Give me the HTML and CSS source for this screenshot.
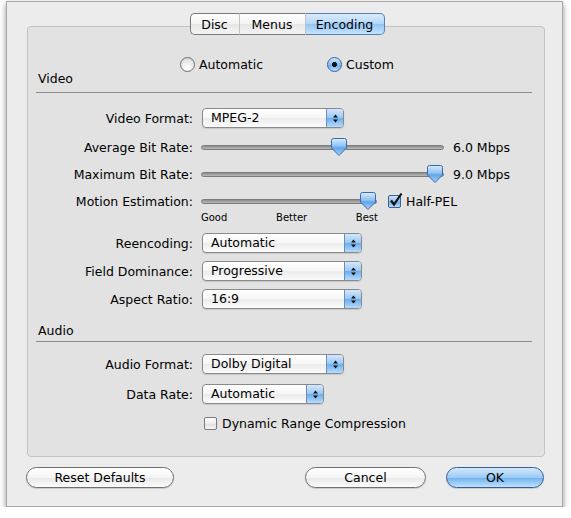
FILE: index.html
```html
<!DOCTYPE html>
<html lang="en">

<head>
    <meta charset="UTF-8">
    <meta name="viewport" content="width=device-width, initial-scale=1.0">
    <title>Encoding</title>
    <link rel="stylesheet" href="styles.css">
</head>

<body>
    <div class="window">
        <div class="tabs">
            <span class="tab tab-disc">Disc</span><span class="tab tab-menus">Menus</span><span class="tab tab-encoding active">Encoding</span>
        </div>

        <div class="panel">
            <div class="mode">
                <label class="radio radio-auto"><span class="radio-dot"></span>Automatic</label>
                <label class="radio on"><span class="radio-dot"></span>Custom</label>
            </div>

            <!-- Video -->
            <div class="section">Video</div>

            <div class="row row-format">
                <span class="label">Video Format:</span>
                <div class="popup popup-md">
                    <span class="popup-text">MPEG-2</span>
                    <span class="popup-arrows"><svg width="7" height="11" viewBox="0 0 7 11"><path d="M3.5 1.5L6 4.5H1Z M3.5 9.5L1 6.5H6Z" fill="#111"/></svg></span>
                </div>
            </div>

            <div class="row row-avg">
                <span class="label">Average Bit Rate:</span>
                <div class="slider slider-long">
                    <div class="track"></div>
                    <svg class="thumb" style="left: 130px" width="16" height="18" viewBox="0 0 16 18"><defs><linearGradient id="tg1" x1="0" y1="0" x2="0" y2="1"><stop offset="0" stop-color="#d8eafc"/><stop offset="0.45" stop-color="#8fc1f2"/><stop offset="0.55" stop-color="#5ea6ea"/><stop offset="1" stop-color="#a9d3fa"/></linearGradient></defs><path d="M2.5 0.5H13.5Q15.5 0.5 15.5 2.5V10L8 17.5L0.5 10V2.5Q0.5 0.5 2.5 0.5Z" fill="url(#tg1)" stroke="#3c6aa8"/></svg>
                </div>
                <span class="value">6.0 Mbps</span>
            </div>

            <div class="row row-max">
                <span class="label">Maximum Bit Rate:</span>
                <div class="slider slider-long">
                    <div class="track"></div>
                    <svg class="thumb" style="left: 226px" width="16" height="18" viewBox="0 0 16 18"><defs><linearGradient id="tg2" x1="0" y1="0" x2="0" y2="1"><stop offset="0" stop-color="#d8eafc"/><stop offset="0.45" stop-color="#8fc1f2"/><stop offset="0.55" stop-color="#5ea6ea"/><stop offset="1" stop-color="#a9d3fa"/></linearGradient></defs><path d="M2.5 0.5H13.5Q15.5 0.5 15.5 2.5V10L8 17.5L0.5 10V2.5Q0.5 0.5 2.5 0.5Z" fill="url(#tg2)" stroke="#3c6aa8"/></svg>
                </div>
                <span class="value">9.0 Mbps</span>
            </div>

            <div class="row row-motion">
                <span class="label">Motion Estimation:</span>
                <div class="slider slider-short">
                    <div class="track"></div>
                    <svg class="thumb" style="left: 159px" width="16" height="18" viewBox="0 0 16 18"><defs><linearGradient id="tg3" x1="0" y1="0" x2="0" y2="1"><stop offset="0" stop-color="#d8eafc"/><stop offset="0.45" stop-color="#8fc1f2"/><stop offset="0.55" stop-color="#5ea6ea"/><stop offset="1" stop-color="#a9d3fa"/></linearGradient></defs><path d="M2.5 0.5H13.5Q15.5 0.5 15.5 2.5V10L8 17.5L0.5 10V2.5Q0.5 0.5 2.5 0.5Z" fill="url(#tg3)" stroke="#3c6aa8"/></svg>
                </div>
                <label class="check check-pel">
                    <span class="box checked"><svg width="16" height="16" viewBox="0 0 16 16"><path d="M3 8.5L6 12.5L13.5 1.5" fill="none" stroke="#111" stroke-width="2.2"/></svg></span>Half-PEL
                </label>
            </div>
            <div class="ticks">
                <span>Good</span><span>Better</span><span>Best</span>
            </div>

            <div class="row row-reenc">
                <span class="label">Reencoding:</span>
                <div class="popup popup-lg">
                    <span class="popup-text">Automatic</span>
                    <span class="popup-arrows"><svg width="7" height="11" viewBox="0 0 7 11"><path d="M3.5 1.5L6 4.5H1Z M3.5 9.5L1 6.5H6Z" fill="#111"/></svg></span>
                </div>
            </div>

            <div class="row row-field">
                <span class="label">Field Dominance:</span>
                <div class="popup popup-lg">
                    <span class="popup-text">Progressive</span>
                    <span class="popup-arrows"><svg width="7" height="11" viewBox="0 0 7 11"><path d="M3.5 1.5L6 4.5H1Z M3.5 9.5L1 6.5H6Z" fill="#111"/></svg></span>
                </div>
            </div>

            <div class="row row-aspect">
                <span class="label">Aspect Ratio:</span>
                <div class="popup popup-lg">
                    <span class="popup-text">16:9</span>
                    <span class="popup-arrows"><svg width="7" height="11" viewBox="0 0 7 11"><path d="M3.5 1.5L6 4.5H1Z M3.5 9.5L1 6.5H6Z" fill="#111"/></svg></span>
                </div>
            </div>

            <!-- Audio -->
            <div class="section section-audio">Audio</div>

            <div class="row row-audio">
                <span class="label">Audio Format:</span>
                <div class="popup popup-md">
                    <span class="popup-text">Dolby Digital</span>
                    <span class="popup-arrows"><svg width="7" height="11" viewBox="0 0 7 11"><path d="M3.5 1.5L6 4.5H1Z M3.5 9.5L1 6.5H6Z" fill="#111"/></svg></span>
                </div>
            </div>

            <div class="row row-rate">
                <span class="label">Data Rate:</span>
                <div class="popup popup-sm">
                    <span class="popup-text">Automatic</span>
                    <span class="popup-arrows"><svg width="7" height="11" viewBox="0 0 7 11"><path d="M3.5 1.5L6 4.5H1Z M3.5 9.5L1 6.5H6Z" fill="#111"/></svg></span>
                </div>
            </div>

            <div class="row row-drc">
                <span class="label"></span>
                <label class="check"><span class="box"></span>Dynamic Range Compression</label>
            </div>
        </div>

        <div class="buttons">
            <button class="btn btn-reset">Reset Defaults</button>
            <span class="spacer"></span>
            <button class="btn btn-cancel">Cancel</button>
            <button class="btn btn-ok">OK</button>
        </div>
    </div>
</body>
</html>
```

FILE: styles.css
```css
* {
    box-sizing: border-box;
}

body {
    font-family: "DejaVu Sans", Verdana, sans-serif;
    font-size: 12.5px;
    color: #000;
    background-color: #ffffff;
    margin: 0;
    padding: 0;
}

.window {
    width: 557px;
    height: 506px;
    margin: 1px 0 0 6px;
    padding: 11px 17px 0 20px;
    background-color: #ececec;
    border: 1px solid #a8a8a8;
    box-shadow: 0 3px 6px rgba(0, 0, 0, 0.45);
}

/* segmented tab control */
.tabs {
    display: flex;
    justify-content: center;
    position: relative;
    z-index: 1;
    height: 22px;
    padding-left: 2px;
}

.tab {
    display: flex;
    align-items: center;
    justify-content: center;
    height: 22px;
    border: 1px solid #7a7a7a;
    border-left: 1px solid #c4c4c4;
    border-right: none;
    background: linear-gradient(#ffffff, #f3f3f3 50%, #e6e6e6 51%, #f4f4f4);
    font-size: 12.5px;
}

.tab-disc {
    width: 49px;
    border-left: 1px solid #7a7a7a;
    border-radius: 5px 0 0 5px;
}

.tab-menus {
    width: 66px;
}

.tab-encoding {
    width: 80px;
    border-right: 1px solid #5b7fb2;
    border-radius: 0 5px 5px 0;
}

.tab.active {
    border-top-color: #5b7fb2;
    border-bottom-color: #5b7fb2;
    background: linear-gradient(#d9ecfd, #b3d6f7 50%, #92c5f3 51%, #c6e3fd);
}

.panel {
    height: 431px;
    margin-top: -9px;
    padding-top: 27px;
    background-color: #e2e2e2;
    border: 1px solid #c3c3c3;
    border-radius: 4px;
}

/* automatic / custom */
.mode {
    display: flex;
    align-items: center;
    height: 20px;
    padding-left: 152px;
}

.radio {
    display: flex;
    align-items: center;
    gap: 4px;
}

.radio-auto {
    width: 147px;
}

.radio-dot {
    width: 15px;
    height: 15px;
    border-radius: 50%;
    border: 1px solid #6f6f6f;
    background: radial-gradient(circle at 50% 75%, #ffffff, #e6e6e6 60%, #c8c8c8);
}

.radio.on .radio-dot {
    border-color: #3c5f94;
    background: radial-gradient(circle, #111 0 2.2px, transparent 2.7px),
        linear-gradient(#cfe5fb, #8cbef0 50%, #64a8ec 51%, #b9dcfb);
}

.section {
    height: 23px;
    margin: -4px 12px 0 8px;
    padding: 1px 0 0 2px;
    border-bottom: 1px solid #8c8c8c;
}

.section-audio {
    height: 20px;
    margin-top: 12px;
}

.row {
    display: flex;
    align-items: center;
    height: 22px;
}

.label {
    width: 165px;
    flex-shrink: 0;
    margin-right: 9px;
    text-align: right;
}

.row-format { margin-top: 14px; }
.row-avg { margin-top: 7px; }
.row-max { margin-top: 5px; }
.row-motion { margin-top: 5px; }
.row-reenc { margin-top: 8px; }
.row-field { margin-top: 6px; }
.row-aspect { margin-top: 6px; }
.row-audio { margin-top: 11px; }
.row-rate { margin-top: 8px; }
.row-drc { margin-top: 7px; }

/* pop-up menus */
.popup {
    display: flex;
    height: 20px;
    border: 1px solid #8a8a8a;
    border-radius: 4px;
    overflow: hidden;
    background: linear-gradient(#ffffff, #f6f6f6 50%, #ebebeb 51%, #fbfbfb);
    box-shadow: 0 1px 1px rgba(0, 0, 0, 0.12);
}

.popup-sm { width: 122px; }
.popup-md { width: 142px; }
.popup-lg { width: 160px; }

.popup-text {
    flex: 1;
    padding-left: 8px;
    line-height: 18px;
}

.popup-arrows {
    display: flex;
    align-items: center;
    justify-content: center;
    width: 17px;
    border-left: 1px solid #6b8dbd;
    background: linear-gradient(#d3e7fc, #99c7f3 50%, #6aaeee 51%, #b7dbfc);
}

/* sliders */
.slider {
    position: relative;
    height: 22px;
    margin-left: -1px;
}

.slider-long { width: 243px; }
.slider-short { width: 176px; }

.track {
    margin-top: 9px;
    height: 5px;
    border-radius: 3px;
    border: 1px solid #7b7b7b;
    background: linear-gradient(#8d8d8d, #b9b9b9);
}

.thumb {
    position: absolute;
    top: 2px;
}

.value {
    margin-left: 9px;
}

.ticks {
    display: flex;
    justify-content: space-between;
    width: 177px;
    height: 12px;
    margin-left: 173px;
    font-size: 10px;
    line-height: 12px;
}

/* checkboxes */
.check {
    display: flex;
    align-items: center;
    gap: 5px;
}

.check-pel {
    margin-left: 11px;
}

.box {
    position: relative;
    width: 13px;
    height: 13px;
    border: 1px solid #7a7a7a;
    border-radius: 2px;
    background: linear-gradient(#ffffff, #ececec 50%, #dedede 51%, #f6f6f6);
}

.box.checked {
    border-color: #3c5f94;
    background: linear-gradient(#cfe5fb, #8cbef0 50%, #64a8ec 51%, #b9dcfb);
}

.box svg {
    position: absolute;
    left: -1px;
    top: -4px;
}

.row-drc .check {
    margin-left: 2px;
}

/* bottom buttons */
.buttons {
    display: flex;
    align-items: center;
    margin: 10px 1px 0 -1px;
}

.spacer {
    flex: 1;
}

.btn {
    height: 21px;
    padding: 0;
    border: 1px solid #707070;
    border-radius: 11px;
    font-family: "DejaVu Sans", Verdana, sans-serif;
    font-size: 12.5px;
    color: #000;
    background: linear-gradient(#ffffff, #f5f5f5 50%, #e8e8e8 51%, #fbfbfb);
    box-shadow: 0 1px 1px rgba(0, 0, 0, 0.15);
}

.btn-reset { width: 148px; }
.btn-cancel { width: 121px; }

.btn-ok {
    width: 98px;
    margin-left: 20px;
    border-color: #3a5c8f;
    background: linear-gradient(#d3e8fc, #9ccaf4 50%, #6db1ef 51%, #bfe1fd);
}
```
